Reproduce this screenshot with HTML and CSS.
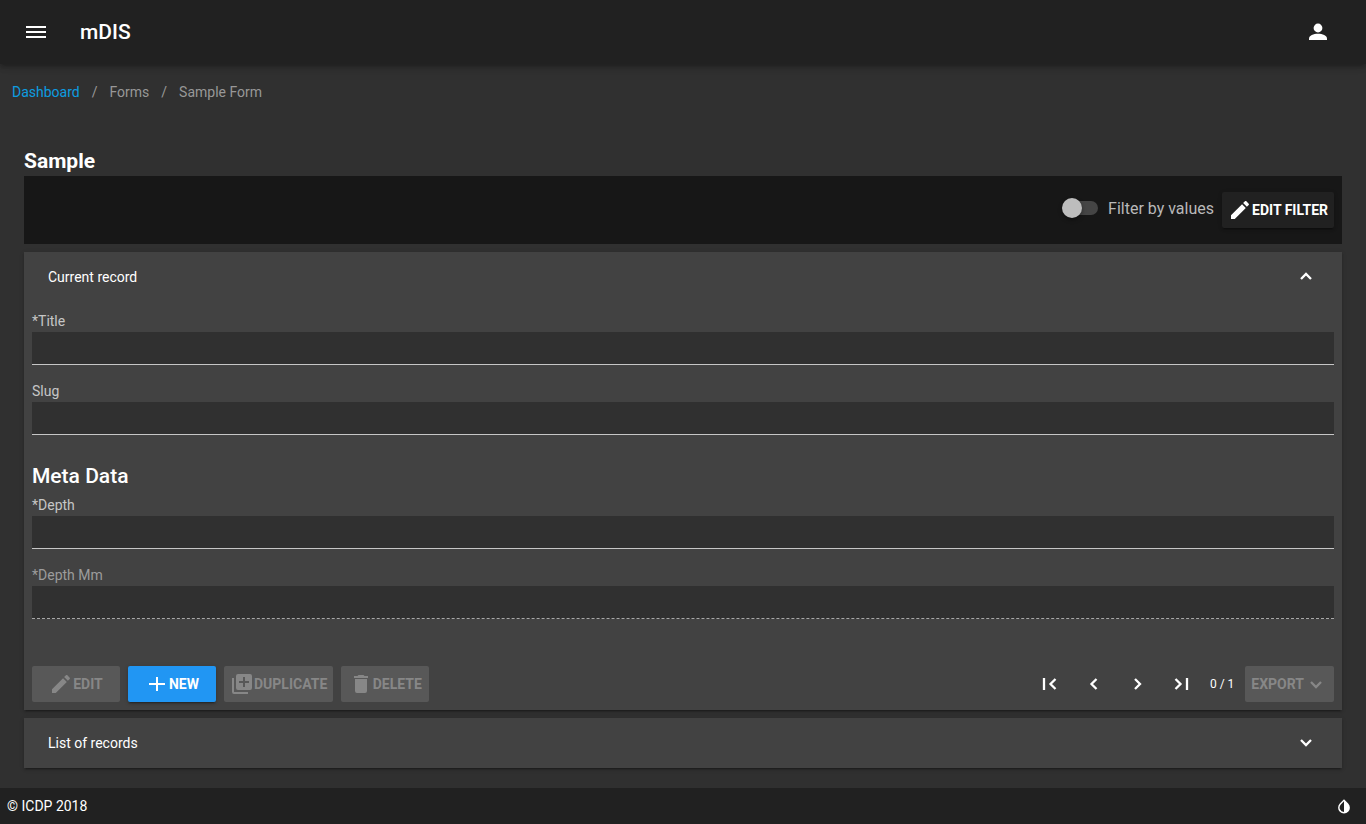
FILE: index.html
```html
<!DOCTYPE html>
<html lang="en">
<head>
    <meta charset="UTF-8">
    <meta name="viewport" content="width=device-width, initial-scale=1">
    <title>mDIS</title>
    <link rel="stylesheet" href="styles.css">
</head>
<body>
    <header class="app-bar">
        <button type="button" class="icon-btn" aria-label="Menu">
            <svg class="icon" viewBox="0 0 24 24"><path d="M2 6h20v2H2zM2 11h20v2H2zM2 16h20v2H2z"/></svg>
        </button>
        <span class="app-title">mDIS</span>
        <button type="button" class="icon-btn account" aria-label="Account">
            <svg class="icon" viewBox="0 0 24 24"><circle cx="12" cy="8" r="4.4"/><path d="M3 20v-1.6C3 15.6 7.5 13.7 12 13.7s9 1.9 9 4.7V20z"/></svg>
        </button>
    </header>

    <nav aria-label="Breadcrumb">
        <ul class="breadcrumbs">
            <li><a href="#">Dashboard</a></li>
            <li>Forms</li>
            <li>Sample Form</li>
        </ul>
    </nav>

    <main class="content">
        <h1 class="form-title">Sample</h1>

        <div class="filter-bar">
            <label class="switch-label"><input type="checkbox" class="switch">Filter by values</label>
            <button type="button" class="btn btn-dark">
                <svg class="icon" viewBox="0 0 24 24"><path d="M20.71 7.04c.39-.39.39-1.04 0-1.41l-2.34-2.34c-.37-.39-1.02-.39-1.41 0l-1.84 1.83 3.75 3.75M3 17.25V21h3.75L17.81 9.93l-3.75-3.75z"/></svg>Edit filter
            </button>
        </div>

        <section class="panel">
            <button type="button" class="panel-header" aria-expanded="true">
                Current record
                <svg class="icon icon-line" viewBox="0 0 24 24"><path d="M7 14l5-5 5 5"/></svg>
            </button>
            <form class="panel-body">
                <div class="field">
                    <label for="title">*Title</label>
                    <input type="text" id="title">
                </div>
                <div class="field">
                    <label for="slug">Slug</label>
                    <input type="text" id="slug">
                </div>

                <h2 class="group-title">Meta Data</h2>
                <div class="field">
                    <label for="depth">*Depth</label>
                    <input type="text" id="depth">
                </div>
                <div class="field field-disabled">
                    <label for="depth-mm">*Depth Mm</label>
                    <input type="text" id="depth-mm" disabled>
                </div>

                <div class="actions">
                    <button type="button" class="btn" disabled>
                        <svg class="icon" viewBox="0 0 24 24"><path d="M20.71 7.04c.39-.39.39-1.04 0-1.41l-2.34-2.34c-.37-.39-1.02-.39-1.41 0l-1.84 1.83 3.75 3.75M3 17.25V21h3.75L17.81 9.93l-3.75-3.75z"/></svg>Edit
                    </button>
                    <button type="button" class="btn btn-primary">
                        <svg class="icon" viewBox="0 0 24 24"><path d="M20 13h-7v6h-2v-6H4v-2h7V5h2v6h7z"/></svg>New
                    </button>
                    <button type="button" class="btn" disabled>
                        <svg class="icon" viewBox="0 0 24 24"><path d="M19 11h-4v4h-2v-4H9V9h4V5h2v4h4m1-7H8a2 2 0 0 0-2 2v12a2 2 0 0 0 2 2h12a2 2 0 0 0 2-2V4a2 2 0 0 0-2-2M4 6H2v14a2 2 0 0 0 2 2h14v-2H4z"/></svg>Duplicate
                    </button>
                    <button type="button" class="btn" disabled>
                        <svg class="icon" viewBox="0 0 24 24"><path d="M19 4h-3.5l-1-1h-5l-1 1H5v2h14M6 19a2 2 0 0 0 2 2h8a2 2 0 0 0 2-2V7H6z"/></svg>Delete
                    </button>

                    <div class="pager">
                        <button type="button" class="icon-btn" aria-label="First record">
                            <svg class="icon icon-line" viewBox="0 0 24 24"><path d="M7 6v12M18.5 7l-5 5 5 5"/></svg>
                        </button>
                        <button type="button" class="icon-btn" aria-label="Previous record">
                            <svg class="icon icon-line" viewBox="0 0 24 24"><path d="M15.5 7l-5 5 5 5"/></svg>
                        </button>
                        <button type="button" class="icon-btn" aria-label="Next record">
                            <svg class="icon icon-line" viewBox="0 0 24 24"><path d="M10 7l5 5-5 5"/></svg>
                        </button>
                        <button type="button" class="icon-btn" aria-label="Last record">
                            <svg class="icon icon-line" viewBox="0 0 24 24"><path d="M6.500 7l5 5-5 5M18 6v12"/></svg>
                        </button>
                        <span class="record-count">0 / 1</span>
                        <button type="button" class="btn" disabled>
                            Export<svg class="icon icon-line" viewBox="0 0 24 24"><path d="M7 10l5 5 5-5"/></svg>
                        </button>
                    </div>
                </div>
            </form>
        </section>

        <section class="panel">
            <button type="button" class="panel-header" aria-expanded="false">
                List of records
                <svg class="icon icon-line" viewBox="0 0 24 24"><path d="M7 9l5 5 5-5"/></svg>
            </button>
        </section>
    </main>

    <footer class="footer">
        <span>&copy; ICDP 2018</span>
        <button type="button" class="theme-btn" aria-label="Toggle theme">
            <svg class="icon icon-small" viewBox="0 0 16 16"><path fill-rule="evenodd" d="M8 1.200l4.200 4.300a5.900 5.900 0 1 1-8.400 0zM8 3.300L4.800 6.600a4.400 4.400 0 0 0 3.200 7.400z"/></svg>
        </button>
    </footer>
</body>
</html>
```
FILE: styles.css
```css
* {
    box-sizing: border-box;
}
body {
    margin: 0;
    min-height: 100vh;
    display: flex;
    flex-direction: column;
    background-color: #303030;
    color: #fff;
    font-family: Roboto, sans-serif;
    font-size: 14px;
}
button,
input {
    font: inherit;
    color: inherit;
}
button {
    border: 0;
    padding: 0;
    background: none;
    cursor: pointer;
}
button:disabled {
    cursor: default;
}
.icon {
    width: 24px;
    height: 24px;
    flex: none;
    fill: currentColor;
}
.icon-line {
    fill: none;
    stroke: currentColor;
    stroke-width: 2.3;
}
.icon-small {
    width: 16px;
    height: 16px;
}
.icon-btn {
    width: 36px;
    height: 36px;
    display: flex;
    align-items: center;
    justify-content: center;
}

/* top bar */
.app-bar {
    height: 64px;
    padding: 0 30px 0 18px;
    display: flex;
    align-items: center;
    background-color: #212121;
    box-shadow: 0 2px 4px -1px rgba(0, 0, 0, 0.2), 0 4px 5px rgba(0, 0, 0, 0.14), 0 1px 10px rgba(0, 0, 0, 0.12);
}
.app-title {
    margin-left: 26px;
    font-size: 21px;
    font-weight: 500;
}
.account {
    margin-left: auto;
}

.breadcrumbs {
    display: flex;
    margin: 0;
    padding: 18px 12px;
    list-style: none;
    line-height: 20px;
    color: #989898;
}
.breadcrumbs li + li::before {
    content: "/";
    padding: 0 12px;
}
.breadcrumbs a {
    color: #0d9de0;
    text-decoration: none;
}

.content {
    flex: 1;
    padding: 26px 24px 20px;
}
.form-title {
    margin: 0;
    font-size: 21px;
    font-weight: 700;
    line-height: 30px;
}

/* filter */
.filter-bar {
    display: flex;
    align-items: center;
    justify-content: flex-end;
    gap: 8px;
    padding: 16px 8px;
    background-color: #171717;
}
.switch-label {
    display: flex;
    align-items: center;
    gap: 10px;
    padding-bottom: 4px;
    font-size: 16px;
    color: #b9b9b9;
}
.switch {
    appearance: none;
    position: relative;
    width: 36px;
    height: 20px;
    margin: 0;
}
.switch::before {
    content: "";
    position: absolute;
    top: 3px;
    left: 4px;
    width: 32px;
    height: 14px;
    border-radius: 7px;
    background-color: #454545;
}
.switch::after {
    content: "";
    position: absolute;
    top: 0;
    left: 0;
    width: 20px;
    height: 20px;
    border-radius: 50%;
    background-color: #bdbdbd;
    box-shadow: 0 2px 4px rgba(0, 0, 0, 0.4);
}
.switch:checked::after {
    left: 16px;
}

.btn {
    min-width: 88px;
    height: 36px;
    padding: 0 6px;
    display: flex;
    align-items: center;
    justify-content: center;
    border-radius: 2px;
    font-weight: 700;
    text-transform: uppercase;
}
.btn:disabled {
    background-color: #585858;
    color: #878787;
}
.btn-dark,
.btn-primary {
    box-shadow: 0 3px 1px -2px rgba(0, 0, 0, 0.2), 0 2px 2px rgba(0, 0, 0, 0.14), 0 1px 5px rgba(0, 0, 0, 0.12);
}
.btn-dark {
    background-color: #212121;
}
.btn-primary {
    background-color: #2196f3;
}

/* panels */
.panel {
    margin-top: 8px;
    background-color: #424242;
    box-shadow: 0 3px 1px -2px rgba(0, 0, 0, 0.2), 0 2px 2px rgba(0, 0, 0, 0.14), 0 1px 5px rgba(0, 0, 0, 0.12);
}
.panel-header {
    width: 100%;
    height: 50px;
    padding: 0 24px;
    display: flex;
    align-items: center;
    justify-content: space-between;
}
.panel-body {
    padding: 8px;
}
.field {
    padding-bottom: 15px;
}
.field label {
    display: block;
    line-height: 22px;
    color: #c6c6c6;
}
.field input {
    display: block;
    width: 100%;
    height: 33px;
    padding: 0 8px;
    border: 0;
    border-bottom: 1px solid #c6c6c6;
    border-radius: 0;
    background-color: #303030;
    outline: none;
}
.field-disabled label {
    color: #9c9c9c;
}
.field-disabled input {
    border-bottom: 1px dashed #a8a8a8;
}
.group-title {
    margin: 0;
    padding-top: 8px;
    font-size: 21px;
    font-weight: 500;
    line-height: 36px;
}
.actions {
    display: flex;
    gap: 8px;
    padding-top: 32px;
}
.pager {
    display: flex;
    align-items: center;
    gap: 8px;
    margin-left: auto;
}
.record-count {
    padding: 0 3px;
    font-size: 12px;
}

.footer {
    height: 36px;
    padding: 0 14px 0 7px;
    display: flex;
    align-items: center;
    justify-content: space-between;
    background-color: #212121;
}
.theme-btn {
    display: flex;
}
```
